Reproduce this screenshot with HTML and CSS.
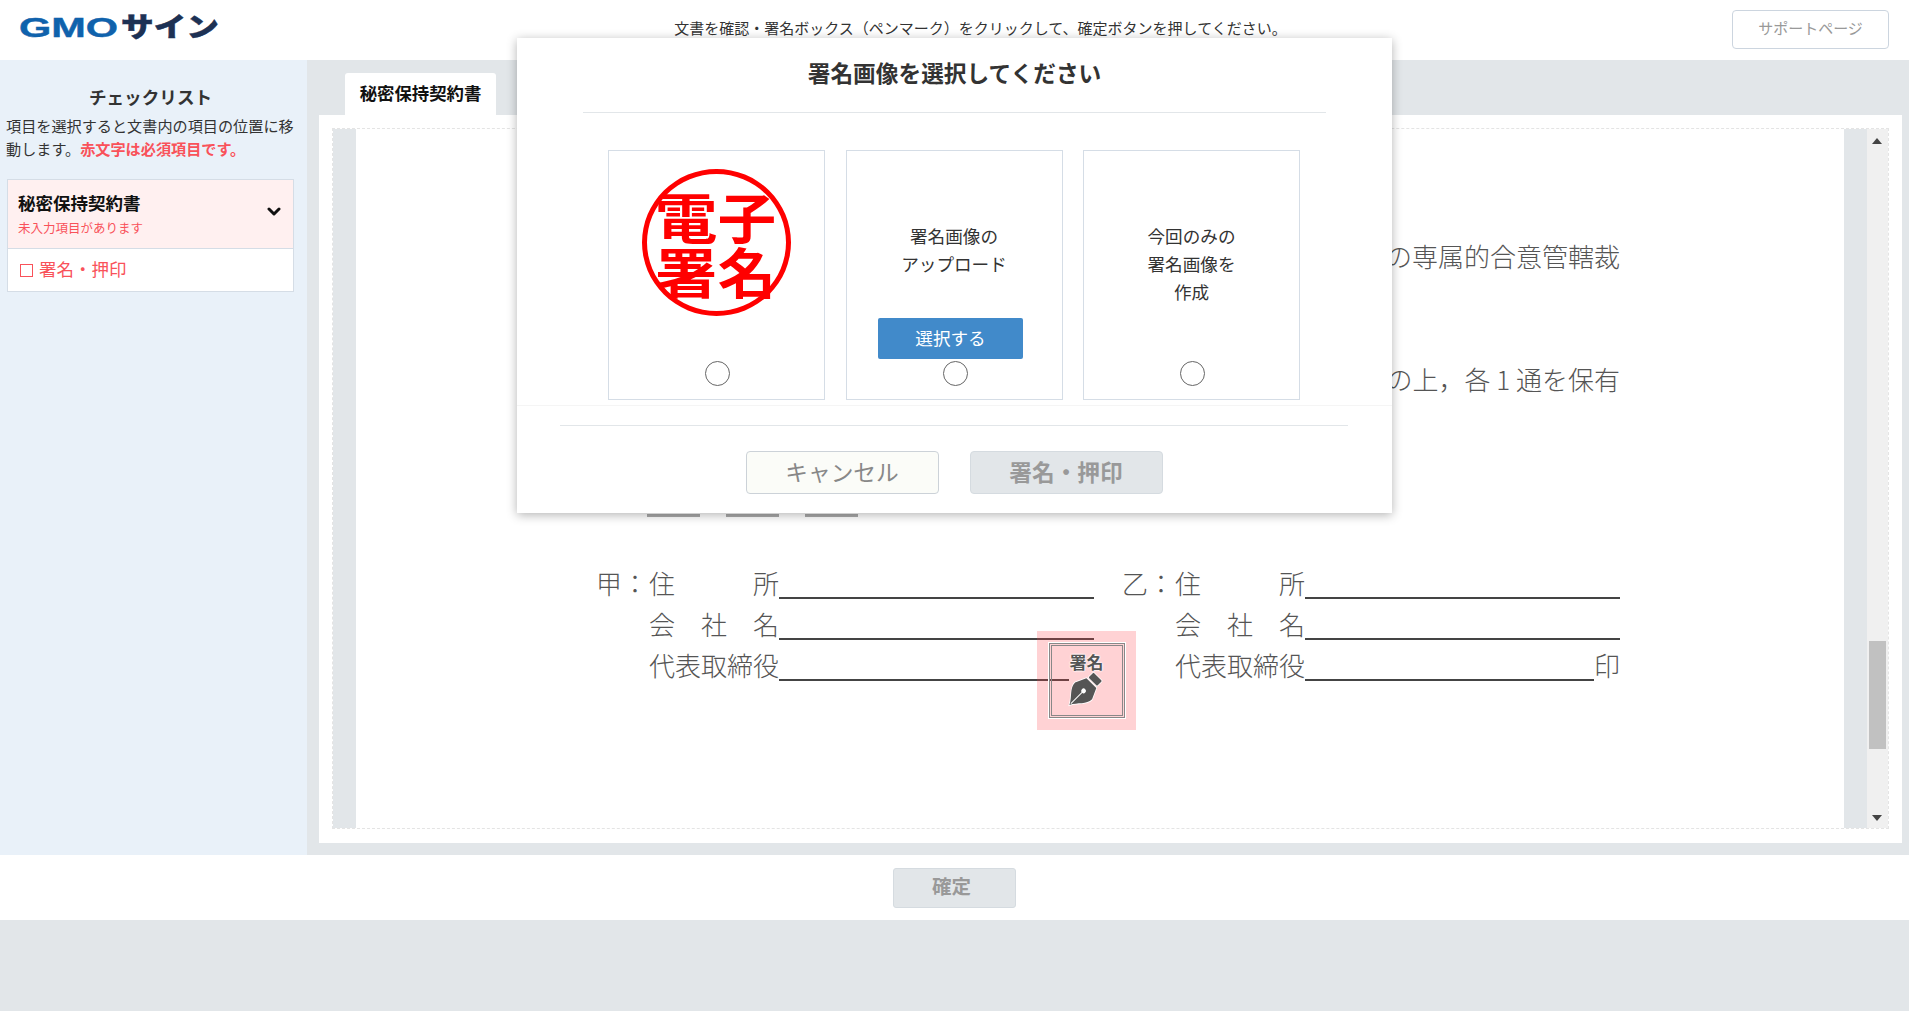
FILE: index.html
```html
<!DOCTYPE html>
<html lang="ja">
<head>
<meta charset="utf-8">
<title>GMOサイン</title>
<link rel="stylesheet" href="styles.css">
</head>
<body>
<header class="top">
  <svg class="logo" viewBox="0 0 204 40" width="204" height="40">
    <text class="logo-gmo" x="0" y="27" textLength="99" lengthAdjust="spacingAndGlyphs">GMO</text>
    <text class="logo-sign" x="102" y="26.5" textLength="98" lengthAdjust="spacingAndGlyphs">サイン</text>
  </svg>
  <p class="notice">文書を確認・署名ボックス（ペンマーク）をクリックして、確定ボタンを押してください。</p>
  <a class="support">サポートページ</a>
</header>

<div class="middle">
  <aside class="side">
    <h2 class="side-title">チェックリスト</h2>
    <p class="side-desc"><span class="desc-line">項目を選択すると文書内の項目の位置に移</span><span class="desc-line">動します。<strong class="req">赤文字は必須項目です。</strong></span></p>
    <div class="check">
      <div class="check-head">
        <div>
          <div class="check-name">秘密保持契約書</div>
          <div class="check-sub">未入力項目があります</div>
        </div>
        <svg class="chev" viewBox="0 0 14 10" width="14" height="10"><polyline points="2,2 7,7 12,2"/></svg>
      </div>
      <div class="check-row"><span class="box"></span>署名・押印</div>
    </div>
  </aside>

  <main class="main">
    <div class="tab">秘密保持契約書</div>
    <div class="panel">
      <div class="viewer">
        <div class="gutter gutter-l"></div>
        <div class="page">
          <p class="doc-line doc-line-1">の専属的合意管轄裁</p>
          <p class="doc-line doc-line-2">の上，各 1 通を保有</p>
          <div class="dates"><i></i><i></i><i></i></div>
          <div class="form">
            <div class="row">
              <span class="party">甲：</span><span class="label">住所</span><span class="rule"></span>
              <span class="party party-r">乙：</span><span class="label">住所</span><span class="rule"></span>
            </div>
            <div class="row">
              <span class="party"></span><span class="label">会社名</span><span class="rule"></span>
              <span class="party party-r"></span><span class="label">会社名</span><span class="rule"></span>
            </div>
            <div class="row">
              <span class="party"></span><span class="label">代表取締役</span><span class="rule rule-short"></span>
              <span class="party party-r"></span><span class="label">代表取締役</span><span class="rule rule-seal"></span><span class="inkan">印</span>
            </div>
          </div>
          <div class="stamp">
            <div class="stamp-box">
              <span class="stamp-text">署名</span>
              <svg class="nib" viewBox="0 0 37 35" width="37" height="35">
                <g transform="translate(17 -8) rotate(45)">
                  <rect class="nib-fill" x="12" y="0" width="12" height="7" rx="1"/>
                  <path class="nib-fill" d="M11 9H25L30 20C30 28 22 32 18 40C14 32 6 28 6 20Z"/>
                  <path class="nib-slit" d="M18 20V38"/>
                  <circle class="nib-hole" cx="18" cy="20" r="2.4"/>
                </g>
              </svg>
            </div>
          </div>
        </div>
        <div class="gutter gutter-r"></div>
        <div class="scroll">
          <span class="arrow arrow-up"></span>
          <span class="thumb"></span>
          <span class="arrow arrow-down"></span>
        </div>
      </div>
    </div>
  </main>
</div>

<footer class="foot"><button class="confirm">確定</button></footer>
<div class="bottom"></div>

<section class="modal">
  <h1 class="modal-title">署名画像を選択してください</h1>
  <hr class="modal-hr">
  <div class="cards">
    <div class="card card-seal">
      <div class="seal">
        <span>電</span><span>子</span><span>署</span><span>名</span>
      </div>
      <input class="radio" type="radio" name="sig">
    </div>
    <div class="card">
      <p class="card-text">署名画像の<br>アップロード</p>
      <button class="pick">選択する</button>
      <input class="radio" type="radio" name="sig">
    </div>
    <div class="card">
      <p class="card-text">今回のみの<br>署名画像を<br>作成</p>
      <input class="radio" type="radio" name="sig">
    </div>
  </div>
  <div class="modal-foot">
    <hr class="foot-hr">
    <div class="actions">
      <button class="btn btn-cancel">キャンセル</button>
      <button class="btn btn-sign">署名・押印</button>
    </div>
  </div>
</section>
</body>
</html>
```

FILE: styles.css
```css
* { box-sizing: border-box; }
html, body { margin: 0; height: 100%; }
body {
  width: 1909px;
  height: 1011px;
  overflow: hidden;
  position: relative;
  display: flex;
  flex-direction: column;
  background: #e2e6e9;
  color: #333;
  font-family: "Noto Sans CJK JP", "Noto Sans", sans-serif;
  font-size: 15px;
}
p, h1, h2 { margin: 0; }

.top {
  height: 60px;
  flex: none;
  background: #fff;
  display: flex;
  align-items: center;
  position: relative;
  padding: 0 20px 0 19px;
  justify-content: space-between;
}
.logo { overflow: visible; }
.logo-gmo {
  font-family: "Liberation Sans", sans-serif;
  font-weight: 700;
  font-size: 27px;
  fill: #0f62ac;
  stroke: #0f62ac;
  stroke-width: .4px;
}
.logo-sign {
  font-family: "Noto Sans CJK JP", sans-serif;
  font-weight: 900;
  font-size: 27px;
  fill: #1d3154;
  stroke: #1d3154;
  stroke-width: .5px;
}
.notice {
  position: absolute;
  left: 0;
  right: 0;
  top: 17px;
  text-align: center;
  line-height: 22px;
  font-size: 15px;
  color: #333;
  padding-left: 52px;
}
.support {
  width: 157px;
  height: 39px;
  margin-top: -2px;
  border: 1px solid #ccd5df;
  border-radius: 4px;
  color: #999;
  display: flex;
  align-items: center;
  justify-content: center;
  font-size: 15px;
  padding-bottom: 3px;
}

.middle { height: 795px; flex: none; display: flex; }
.side {
  width: 307px;
  flex: none;
  background: #e9f1f9;
  padding: 25px 12px 0 6px;
}
.side-title {
  font-size: 17.6px;
  line-height: 24px;
  font-weight: 700;
  text-align: center;
  color: #333;
}
.side-desc { margin-top: 4px; font-size: 15.15px; color: #333; }
.desc-line { display: block; line-height: 24px; white-space: nowrap; }
.desc-line + .desc-line { margin-top: -1px; }
.req { color: #f9525a; font-weight: 700; }
.check { margin: 19px 1px 0; border: 1px solid #d5dde6; background: #fff; }
.check-head {
  height: 69px;
  background: #fff0f0;
  border-bottom: 1px solid #d5dde6;
  padding: 11px 12px 0 10px;
  display: flex;
  justify-content: space-between;
  align-items: flex-start;
}
.check-name { font-size: 17.5px; line-height: 24px; font-weight: 700; color: #111; }
.check-sub { margin-top: 4px; font-size: 12.5px; line-height: 18px; color: #f9525a; }
.chev { margin-top: 16px; }
.chev polyline { fill: none; stroke: #111; stroke-width: 3; stroke-linecap: round; stroke-linejoin: round; }
.check-row {
  height: 42px;
  display: flex;
  align-items: center;
  padding: 0 0 4px 12px;
  font-size: 17.5px;
  color: #f9525a;
}
.box {
  width: 13px;
  height: 13px;
  border: 1.5px solid #f9525a;
  margin-right: 6px;
  margin-top: 5px;
}

.main { flex: 1; background: #e2e6e9; padding: 13px 7px 12px 12px; display: flex; flex-direction: column; }
.tab {
  width: 151px;
  height: 42px;
  margin-left: 26px;
  flex: none;
  background: #fff;
  border-radius: 3px 3px 0 0;
  font-size: 17.4px;
  font-weight: 700;
  color: #111;
  display: flex;
  align-items: center;
  justify-content: center;
  padding-bottom: 4px;
}
.panel { flex: 1; background: #fff; padding: 13px 13px 14px; display: flex; }
.viewer { flex: 1; display: flex; border: 1px dashed #e4e4e4; background: #fff; }
.gutter { flex: none; background: #e2e6e9; }
.gutter-l { width: 23px; }
.gutter-r { width: 23px; }
.page { flex: 1; position: relative; padding-top: 109px; color: #555; font-weight: 300; font-size: 26px; }
.doc-line { line-height: 36px; text-align: right; padding-right: 224px; white-space: nowrap; }
.doc-line-2 { margin-top: 87px; }
.dates { margin: 117px 0 0 291px; display: flex; gap: 26px; }
.dates i { width: 53px; height: 3px; background: #aaa; display: block; }
.form { margin: 42px 0 0 242px; width: 1022px; }
.row { height: 41px; display: flex; align-items: flex-end; line-height: 26px; }
.party { width: 53px; margin-left: -2px; flex: none; white-space: nowrap; height: 26px; margin-bottom: 4px; }
.party-r { margin-left: 28px; }
.label {
  width: 130px;
  flex: none;
  height: 26px;
  margin-bottom: 4px;
  text-align: justify;
  text-align-last: justify;
}
.rule { width: 315px; flex: none; height: 2px; background: #444; margin-bottom: 1px; }
.rule-short { width: 290px; margin-right: 25px; }
.rule-seal { width: 289px; }
.inkan { width: 26px; flex: none; margin-bottom: 4px; }
.stamp {
  position: absolute;
  left: 681px;
  top: 502px;
  width: 99px;
  height: 99px;
  background: rgba(255, 60, 70, .23);
  display: flex;
  align-items: center;
  justify-content: center;
}
.stamp-box {
  width: 76px;
  height: 75px;
  border: 3px double #888;
  outline: 1px solid #fff;
  display: flex;
  flex-direction: column;
  align-items: center;
  padding-top: 6px;
}
.stamp-text {
  font-size: 17px;
  line-height: 20px;
  font-weight: 700;
  color: #555;
  text-shadow: 0 0 2px #fff, 0 0 2px #fff, 0 0 2px #fff;
}
.nib { margin-top: 0; }
.nib-fill { fill: #555; stroke: #fff; stroke-width: 1.5; paint-order: stroke; }
.nib-slit { stroke: #fff; stroke-width: 1; fill: none; }
.nib-hole { fill: #fff; }

.scroll { width: 21px; flex: none; background: #f0f0f0; position: relative; }
.arrow { position: absolute; left: 5px; width: 0; height: 0; border-left: 5px solid transparent; border-right: 5px solid transparent; }
.arrow-up { top: 9px; border-bottom: 6px solid #444; }
.arrow-down { bottom: 7px; border-top: 6px solid #444; }
.thumb { position: absolute; left: 2px; right: 2px; top: 512px; height: 108px; background: #c1c1c1; }

.foot {
  height: 65px;
  flex: none;
  background: #fff;
  display: flex;
  justify-content: center;
  align-items: center;
}
.confirm {
  width: 123px;
  height: 40px;
  border: 1px solid #d5dbe0;
  border-radius: 3px;
  background: #e2e6e9;
  color: #999;
  font: 700 19.5px "Noto Sans CJK JP", sans-serif;
  padding: 0 6px 5px 0;
}
.bottom { flex: 1; background: #e2e6e9; }

.modal {
  position: absolute;
  left: 517px;
  top: 38px;
  width: 875px;
  height: 475px;
  background: #fff;
  box-shadow: 0 2px 10px rgba(0, 0, 0, .3);
  padding-top: 18px;
}
.modal-title { font-size: 22.7px; line-height: 34px; font-weight: 700; text-align: center; color: #333; }
.modal-hr { border: 0; border-top: 1px solid #e2e6e9; margin: 22px 66px 0; }
.cards { margin: 37px 0 0 -1px; display: flex; justify-content: center; gap: 20.5px; }
.card {
  width: 217px;
  height: 250px;
  border: 1px solid #d5dde6;
  display: flex;
  flex-direction: column;
  align-items: center;
  padding-top: 71px;
  position: relative;
}
.card-seal { padding-top: 18px; }
.card-text { font-size: 17.6px; line-height: 28px; text-align: center; color: #333; }
.seal {
  width: 149px;
  height: 147px;
  border: 5px solid #f00;
  border-radius: 50%;
  display: grid;
  grid-template-columns: 60px 58px;
  grid-template-rows: 55px 55px;
  justify-content: center;
  align-content: center;
  color: #f00;
  font-size: 54px;
  font-weight: 700;
  line-height: 55px;
  text-align: center;
}
.seal span { display: block; transform: scaleX(1.08); }
.seal span:nth-child(odd) { transform: translateX(-2px) scaleX(1.16); }
.radio {
  appearance: none;
  -webkit-appearance: none;
  width: 25px;
  height: 25px;
  border: 1.5px solid #666;
  border-radius: 50%;
  background: #fff;
  margin: 0;
  position: absolute;
  left: 96px;
  bottom: 13px;
}
.pick {
  margin-top: 40px;
  margin-right: 7px;
  width: 145px;
  height: 41px;
  border: 0;
  border-radius: 2px;
  background: #418aca;
  color: #fff;
  font: 400 17.6px "Noto Sans CJK JP", sans-serif;
  padding: 0 0 3px;
}
.modal-foot { margin-top: 5px; border-top: 1px solid #f5f5f5; padding: 19px 44px 0 43px; }
.foot-hr { border: 0; border-top: 1px solid #e2e6e9; margin: 0; }
.actions { margin-top: 25px; display: flex; justify-content: center; gap: 31px; }
.btn {
  width: 193px;
  height: 43px;
  border-radius: 4px;
  padding: 0 0 3px;
  font-family: "Noto Sans CJK JP", sans-serif;
  font-size: 22.7px;
}
.btn-cancel { background: #fbfcf8; border: 1px solid #ccd2d8; color: #888; font-weight: 400; }
.btn-sign { background: #e2e6e9; border: 1px solid #d5dbe0; color: #999; font-weight: 700; }
```
